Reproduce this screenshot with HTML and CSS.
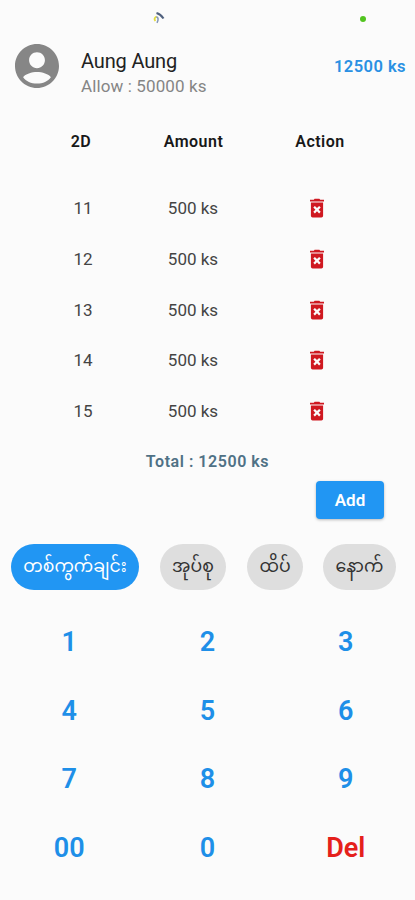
FILE: index.html
```html
<!DOCTYPE html>
<html lang="my">
<head>
<meta charset="utf-8">
<meta name="viewport" content="width=device-width, initial-scale=1">
<title>2D</title>
<link rel="stylesheet" href="styles.css">
</head>
<body>
<svg class="defs" width="0" height="0" aria-hidden="true">
  <symbol id="trash" viewBox="0 0 16 20">
    <path d="M1 1.700h3.800L5.600.8h4.800l.8.900H15v1.800H1z"/>
    <path fill-rule="evenodd" d="M1.900 4.500h12.200v13.200q0 1.700-1.700 1.700H3.600q-1.700 0-1.700-1.700zM4.300 9.600l2.100 2.100-2.100 2.100 1.600 1.600L8 13.300l2.100 2.100 1.600-1.600-2.100-2.100 2.100-2.100L10.100 8 8 10.100 5.900 8z"/>
  </symbol>
</svg>
<div class="screen">
  <div class="status">
    <svg class="spinner" width="12" height="13" viewBox="0 0 12 13" fill="none">
      <path d="M3.500 2Q7.500 3 10.500 7.500" stroke="#50617e" stroke-width="2.200"/>
      <path d="M3.600 5.500Q.2 7.500 2.400 10" stroke="#e3dc3c" stroke-width="1.800"/>
      <path d="M3.400 5.800Q6.500 7 4 11.800" stroke="#8296b8" stroke-width="1.500"/>
    </svg>
    <span class="dot"></span>
  </div>
  <header class="header">
    <svg class="avatar" width="44" height="44" viewBox="2 2 20 20"><path fill="#868686" d="M12 2C6.480 2 2 6.480 2 12s4.480 10 10 10 10-4.480 10-10S17.520 2 12 2zm0 3.800c2 0 3.600 1.600 3.600 3.600S14 13 12 13s-3.600-1.600-3.600-3.600S10 5.800 12 5.800zm0 14.200c-2.700 0-5-1.100-6.300-2.900 .9-1.500 4-2.400 6.300-2.400s5.400.9 6.300 2.400C17 18.900 14.700 20 12 20z"/></svg>
    <div class="who">
      <div class="name">Aung Aung</div>
      <div class="allow">Allow : 50000 ks</div>
    </div>
    <div class="balance">12500 ks</div>
  </header>
  <div class="row head"><span>2D</span><span>Amount</span><span>Action</span></div>
  <div class="row"><span>11</span><span>500 ks</span><span><svg class="bin"><use href="#trash"/></svg></span></div>
  <div class="row"><span>12</span><span>500 ks</span><span><svg class="bin"><use href="#trash"/></svg></span></div>
  <div class="row"><span>13</span><span>500 ks</span><span><svg class="bin"><use href="#trash"/></svg></span></div>
  <div class="row"><span>14</span><span>500 ks</span><span><svg class="bin"><use href="#trash"/></svg></span></div>
  <div class="row"><span>15</span><span>500 ks</span><span><svg class="bin"><use href="#trash"/></svg></span></div>
  <div class="total">Total : 12500 ks</div>
  <div class="actions"><button class="add">Add</button></div>
  <div class="chips">
    <span class="chip c1 active">တစ်ကွက်ချင်း</span>
    <span class="chip c2">အုပ်စု</span>
    <span class="chip c3">ထိပ်</span>
    <span class="chip c4">နောက်</span>
  </div>
  <div class="keypad">
    <span>1</span><span>2</span><span>3</span>
    <span>4</span><span>5</span><span>6</span>
    <span>7</span><span>8</span><span>9</span>
    <span>00</span><span>0</span><span class="del">Del</span>
  </div>
</div>
</body>
</html>
```
FILE: styles.css
```css
* { box-sizing: border-box; }
body { margin: 0; background: #fbfbfb; font-family: Roboto, "Noto Sans Myanmar", Padauk, "Noto Sans", sans-serif; }
.defs { display: block; height: 0; }
.screen { width: 415px; height: 900px; overflow: hidden; }
.status { height: 36px; display: flex; justify-content: space-between; padding: 11px 49px 0 153px; }
.dot { width: 6px; height: 6px; margin-top: 5px; border-radius: 50%; background: #52c41f; }
.header { height: 75px; display: flex; padding: 8px 9px 0 15px; }
.who { flex: 1; margin-left: 22px; padding-top: 5px; }
.name { font-size: 20px; line-height: 25px; letter-spacing: -.15px; color: #222; }
.allow { font-size: 17px; line-height: 24px; letter-spacing: .12px; color: #858585; }
.balance { padding-top: 13px; font-size: 16.500px; line-height: 20px; font-weight: 600; letter-spacing: .45px; color: #2990e3; }
.row { height: 50.700px; display: grid; grid-template-columns: 110px 110px 138px; padding-left: 28px; align-items: center; justify-items: center; font-size: 17px; color: #444; }
.row.head { height: 61px; margin-bottom: 10.800px; padding-left: 26px; grid-template-columns: 110px 115px 138px; font-size: 16px; font-weight: 600; color: #181818; letter-spacing: .5px; }
.bin { display: block; width: 16px; height: 20px; fill: #cf1820; }
.total { height: 45.200px; padding-top: 16px; font-size: 16px; line-height: 20px; font-weight: 600; letter-spacing: .55px; text-align: center; color: #4f7185; }
.actions { height: 63px; display: flex; justify-content: flex-end; padding-right: 31px; }
.add { width: 68px; height: 38px; border: 0; border-radius: 4px; background: #2196f3; color: #fff; font: 600 17px Roboto, sans-serif; box-shadow: 0 1px 3px #0004; }
.chips { height: 50px; display: flex; padding-left: 11px; }
.chip { height: 46px; border-radius: 24px; background: #dedede; color: #333; font-size: 17.300px; line-height: 44px; text-align: center; white-space: nowrap; }
.chip.active { background: #2196f3; color: #fff; }
.c1 { width: 128px; }
.c2 { width: 66px; margin-left: 21px; }
.c3 { width: 56px; margin-left: 21px; }
.c4 { width: 73px; margin-left: 20px; }
.keypad { display: grid; grid-template-columns: repeat(3, 1fr); grid-auto-rows: 68.700px; align-items: center; justify-items: center; margin-top: 13.300px; font-size: 27px; font-weight: 600; color: #1e8fe8; }
.del { color: #e5201b; }
```
